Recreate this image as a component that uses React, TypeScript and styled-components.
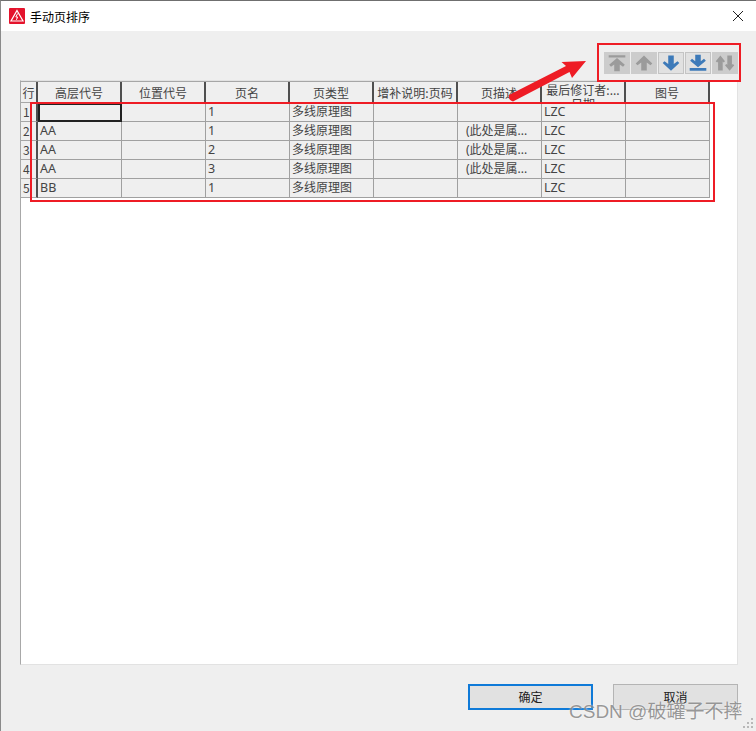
import styled, { createGlobalStyle } from 'styled-components'

const GlobalStyle = createGlobalStyle`
    html, body {
        margin: 0;
        padding: 0;
        background: #efefef;
    }
    * {
        box-sizing: border-box;
    }
`

const Window = styled.div`
    position: relative;
    width: 756px;
    height: 731px;
    display: flex;
    flex-direction: column;
    border-top: 1px solid #6f6f6f;
    border-left: 1px solid #8a8a8a;
    background: #efefef;
    font-family: 'Noto Sans CJK SC', 'Noto Sans', sans-serif;
    font-size: 12px;
    color: #333;
    overflow: hidden;
`

const TitleBar = styled.div`
    height: 30px;
    flex: none;
    display: flex;
    align-items: center;
    gap: 5px;
    padding-left: 8px;
    background: #fff;
    color: #000;
`

const CloseButton = styled.div`
    margin-left: auto;
    width: 36px;
    height: 30px;
    display: flex;
    align-items: center;
    justify-content: center;
`

const Body = styled.div`
    flex: 1;
    display: flex;
    flex-direction: column;
    padding: 21px 18px 21px 19px;
`

const Toolbar = styled.div`
    height: 22px;
    flex: none;
    display: flex;
    justify-content: flex-end;
    gap: 1px;
    margin-bottom: 6px;
`

const ToolButton = styled.div<{ $active?: boolean }>`
    width: 26px;
    height: 22px;
    display: flex;
    align-items: center;
    justify-content: center;
    background: ${(p) => (p.$active ? '#e1e1e1' : '#cccccc')};
    border: 1px solid ${(p) => (p.$active ? '#c4c4c4' : '#cccccc')};
    color: ${(p) => (p.$active ? '#3d7ab9' : '#9b9b9b')};
`

const Panel = styled.div`
    height: 585px;
    flex: none;
    background: #fff;
    border: 1px solid #e2e2e2;
    border-left-color: #a8a8a8;
`

const HeaderRow = styled.div`
    display: flex;
    height: 22px;
    border-top: 1px solid #a6a6a6;
`

const HeaderCell = styled.div<{ $width: number; $wrapped?: boolean }>`
    width: ${(p) => p.$width}px;
    height: 21px;
    flex: none;
    overflow: hidden;
    text-align: center;
    line-height: ${(p) => (p.$wrapped ? '14px' : '16px')};
    padding-top: ${(p) => (p.$wrapped ? '1px' : '3px')};
    background: #efefef;
    border-right: 2px solid #4f4f4f;
    border-bottom: 1px solid #a6a6a6;
    color: #444;
`

const DataRow = styled.div`
    display: flex;
    height: 19px;
`

const RowHead = styled.div`
    width: 17px;
    flex: none;
    padding-left: 2px;
    line-height: 18px;
    background: #efefef;
    border-right: 2px solid #4f4f4f;
    border-bottom: 1px solid #a6a6a6;
    color: #444;
    overflow: hidden;
`

const DataCell = styled.div<{ $selected?: boolean; $latin?: boolean }>`
    width: 84px;
    flex: none;
    padding-left: 2px;
    line-height: 18px;
    white-space: nowrap;
    overflow: hidden;
    background: #efefef;
    border-right: 1px solid #a0a0a0;
    border-bottom: 1px solid #a0a0a0;
    font-family: 'Noto Sans', 'Noto Sans CJK SC', sans-serif;
    font-size: ${(p) => (p.$latin ? '12.5px' : '12px')};
    color: #444;
    ${(p) => p.$selected && 'border: 2px solid #222;'}
`

const Footer = styled.div`
    flex: none;
    display: flex;
    justify-content: flex-end;
    gap: 20px;
    padding-top: 19px;
`

const DialogButton = styled.div<{ $primary?: boolean }>`
    width: 125px;
    height: 26px;
    display: flex;
    align-items: center;
    justify-content: center;
    padding-bottom: 2px;
    background: #e1e1e1;
    border: ${(p) => (p.$primary ? '2px solid #0f7ad8' : '1px solid #b4b4b4')};
    color: #222;
`

const RedBox = styled.div<{ $l: number; $t: number; $w: number; $h: number }>`
    position: absolute;
    left: ${(p) => p.$l}px;
    top: ${(p) => p.$t}px;
    width: ${(p) => p.$w}px;
    height: ${(p) => p.$h}px;
    border: 2px solid #ee1c25;
`

const ArrowMark = styled.svg`
    position: absolute;
    left: 500px;
    top: 50px;
`

const Grip = styled.svg`
    position: absolute;
    right: 2px;
    bottom: 2px;
`

const Watermark = styled.div`
    position: absolute;
    left: 568px;
    top: 699px;
    font-family: 'Liberation Sans', 'Noto Sans CJK SC', sans-serif;
    font-size: 19px;
    line-height: 24px;
    white-space: nowrap;
    color: rgba(120, 120, 120, 0.75);
    text-shadow: 0 0 2px rgba(255, 255, 255, 0.8);
`

const headers = [
    { label: '高层代号', width: 84 },
    { label: '位置代号', width: 84 },
    { label: '页名', width: 84 },
    { label: '页类型', width: 84 },
    { label: '增补说明:页码', width: 84 },
    { label: '页描述', width: 84 },
    { label: '最后修订者:...\n日期', width: 84 },
    { label: '图号', width: 84 },
]

const rows = [
    ['', '', '1', '多线原理图', '', '', 'LZC', ''],
    ['AA', '', '1', '多线原理图', '', '\u2002(此处是属...', 'LZC', ''],
    ['AA', '', '2', '多线原理图', '', '\u2002(此处是属...', 'LZC', ''],
    ['AA', '', '3', '多线原理图', '', '\u2002(此处是属...', 'LZC', ''],
    ['BB', '', '1', '多线原理图', '', '', 'LZC', ''],
]

const UP = 'M13 3 L22 11.5 L20 13.5 L16 10.5 L16 19 L10 19 L10 10.5 L6 13.5 L4 11.5 Z'
const DOWN = 'M13 19.5 L22 11 L20 9 L16 12 L16 3 L10 3 L10 12 L6 9 L4 11 Z'

const icons = [
    { active: false, d: 'M4 2.5 H22 V5 H4 Z M13 5.5 L21.5 13 L19.5 15 L16 12.5 L16 20 L10 20 L10 12.5 L6.5 15 L4.5 13 Z' },
    { active: false, d: UP },
    { active: true, d: DOWN },
    { active: true, d: 'M4 16.5 H22 V19.5 H4 Z M13 15.5 L21.5 8.5 L19.5 6.5 L16 9 L16 2 L10 2 L10 9 L6.5 6.5 L4.5 8.5 Z' },
    { active: false, d: 'M8 3 L13 9 L11.5 10.5 L10.5 9.5 L10.5 19 L5.5 19 L5.5 9.5 L4.5 10.5 L3 9 Z M18 19.5 L23 13.5 L21.5 12 L20.5 13 L20.5 3 L15.5 3 L15.5 13 L14.5 12 L13 13.5 Z' },
]

export default function App() {
    return (
        <Window>
            <GlobalStyle />
            <TitleBar>
                <svg width="16" height="16" viewBox="0 0 16 16">
                    <rect width="16" height="16" rx="1" fill="#e4132c" />
                    <path d="M8 2.5 L14 13 H2 Z" fill="none" stroke="#fff" strokeWidth="1.2" />
                    <path d="M8.6 5.5 L6.8 9 H8.6 L7.4 11.8" fill="none" stroke="#fff" strokeWidth="1" />
                </svg>
                手动页排序
                <CloseButton>
                    <svg width="12" height="12" viewBox="0 0 12 12">
                        <path d="M1 1 L11 11 M11 1 L1 11" stroke="#222" strokeWidth="1" />
                    </svg>
                </CloseButton>
            </TitleBar>
            <Body>
                <Toolbar>
                    {icons.map((icon, i) => (
                        <ToolButton key={i} $active={icon.active}>
                            <svg width="26" height="22" viewBox="0 0 26 22">
                                <path d={icon.d} fill="currentColor" />
                            </svg>
                        </ToolButton>
                    ))}
                </Toolbar>
                <Panel>
                    <HeaderRow>
                        <HeaderCell $width={17}>行</HeaderCell>
                        {headers.map((h) => (
                            <HeaderCell key={h.label} $width={h.width} $wrapped={h.label.includes('\n')}>
                                {h.label.split('\n').map((line) => (
                                    <div key={line}>{line}</div>
                                ))}
                            </HeaderCell>
                        ))}
                    </HeaderRow>
                    {rows.map((row, r) => (
                        <DataRow key={r}>
                            <RowHead>{r + 1}</RowHead>
                            {row.map((cell, c) => (
                                <DataCell key={c} $selected={r === 0 && c === 0} $latin={/^[A-Z0-9]+$/.test(cell)}>
                                    {cell}
                                </DataCell>
                            ))}
                        </DataRow>
                    ))}
                </Panel>
                <Footer>
                    <DialogButton $primary>确定</DialogButton>
                    <DialogButton>取消</DialogButton>
                </Footer>
            </Body>
            <RedBox $l={596} $t={42} $w={144} $h={39} />
            <RedBox $l={29} $t={101} $w={685} $h={100} />
            <ArrowMark width="100" height="60" viewBox="0 0 100 60">
                <path d="M8 44 L65 15 L60.5 11 L85 10 L71 27 L68.5 21 L12 50.5 Q7 49 8 44 Z" fill="#ee1c25" />
            </ArrowMark>
            <Grip width="12" height="12" viewBox="0 0 12 12">
                <path d="M9 1h2v2H9z M5 5h2v2H5z M9 5h2v2H9z M1 9h2v2H1z M5 9h2v2H5z M9 9h2v2H9z" fill="#b8b8b8" />
            </Grip>
            <Watermark>CSDN @破罐子不摔</Watermark>
        </Window>
    )
}
